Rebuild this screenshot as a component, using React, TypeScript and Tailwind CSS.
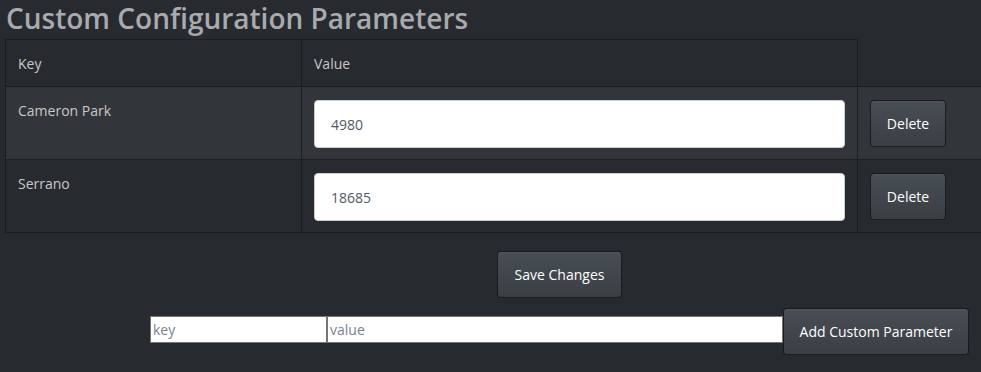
import { useState } from 'react'

type Param = { key: string; value: string }

const initialParams: Param[] = [
  { key: 'Cameron Park', value: '4980' },
  { key: 'Serrano', value: '18685' },
]

const btn =
  'rounded-[4px] border border-[rgba(0,0,0,0.6)] bg-gradient-to-b from-[#484e55] to-[#3a3f44] text-white text-[14px] shadow-[0_1px_0_rgba(255,255,255,0.05)_inset]'

export default function App() {
  const [params, setParams] = useState<Param[]>(initialParams)
  const [newKey, setNewKey] = useState('')
  const [newValue, setNewValue] = useState('')

  return (
    <div
      className="min-h-screen w-full bg-[#272b30] text-[#c8c8c8] overflow-hidden"
      style={{ fontFamily: '"Open Sans", "Noto Sans", sans-serif' }}
    >
      <h2 className="pl-[6px] h-[39px] text-[28px] leading-[37px] font-semibold text-[#a8aaad]">
        Custom Configuration Parameters
      </h2>

      {/* Table */}
      <div className="ml-[5px] text-[14px]">
        <div className="flex h-[48px]">
          <div className="w-[297px] border-t border-l border-r border-b border-[#1c1e22] px-3 flex items-center">
            Key
          </div>
          <div className="w-[556px] border-t border-r border-b border-[#1c1e22] px-3 flex items-center">
            Value
          </div>
          <div className="flex-1 border-b border-[#1c1e22]" />
        </div>

        {params.map((p, i) => (
          <div key={p.key} className={`flex h-[73px] ${i % 2 === 0 ? 'bg-[#32363a]' : ''}`}>
            <div className="w-[297px] border-l border-r border-b border-[#1c1e22] px-3 pt-[14px] leading-[20px]">
              {p.key}
            </div>
            <div className="w-[556px] border-r border-b border-[#1c1e22] px-3 pt-[13px]">
              <input
                value={p.value}
                onChange={(e) =>
                  setParams(params.map((q, j) => (j === i ? { ...q, value: e.target.value } : q)))
                }
                className="w-full h-[48px] rounded-[4px] bg-white border border-[#c9ccd1] px-4 text-[14px] text-[#4f5866] outline-none"
              />
            </div>
            <div className="flex-1 border-b border-[#1c1e22] px-3 pt-[13px]">
              <button
                onClick={() => setParams(params.filter((_, j) => j !== i))}
                className={`${btn} w-[76px] h-[47px]`}
              >
                Delete
              </button>
            </div>
          </div>
        ))}
      </div>

      {/* Actions */}
      <div className="pl-[150px] pr-[12px]">
        <div className="flex justify-center mt-[18px]">
          <button className={`${btn} w-[125px] h-[47px]`}>Save Changes</button>
        </div>
        <div className="flex items-start mt-[10px]">
          <input
            placeholder="key"
            value={newKey}
            onChange={(e) => setNewKey(e.target.value)}
            className="mt-[8px] w-[177px] h-[27px] bg-white border border-[#767676] px-[2px] text-[14px] text-[#333] placeholder:text-[#7b8391] outline-none"
          />
          <input
            placeholder="value"
            value={newValue}
            onChange={(e) => setNewValue(e.target.value)}
            className="mt-[8px] flex-1 min-w-0 h-[27px] bg-white border border-[#767676] px-[2px] text-[14px] text-[#333] placeholder:text-[#7b8391] outline-none"
          />
          <button
            onClick={() => {
              if (!newKey) return
              setParams([...params, { key: newKey, value: newValue }])
              setNewKey('')
              setNewValue('')
            }}
            className={`${btn} w-[186px] h-[47px]`}
          >
            Add Custom Parameter
          </button>
        </div>
      </div>
    </div>
  )
}
